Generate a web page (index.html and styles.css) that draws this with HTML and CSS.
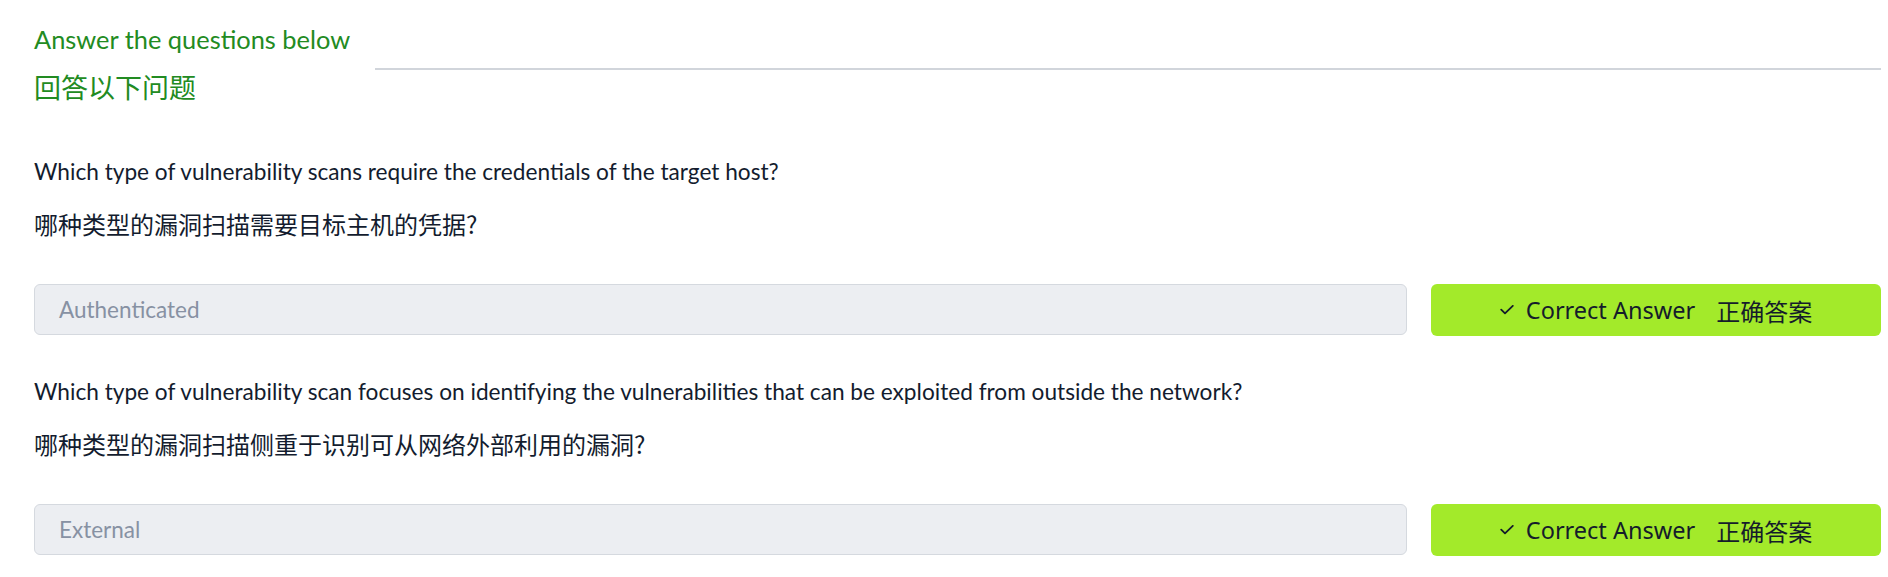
FILE: index.html
```html
<!DOCTYPE html>
<html lang="en">
<head>
<meta charset="utf-8">
<title>Answer the questions below</title>
<link rel="stylesheet" href="styles.css">
</head>
<body>
<section class="task">
  <div class="task-header">
    <div class="heading">
      <div class="heading-en">Answer the questions below</div>
      <div class="heading-zh">回答以下问题</div>
    </div>
    <div class="rule"></div>
  </div>

  <div class="qa">
    <div class="q-en">Which type of vulnerability scans require the credentials of the target host?</div>
    <div class="q-zh">哪种类型的漏洞扫描需要目标主机的凭据?</div>
    <div class="answer-row">
      <div class="answer-input">Authenticated</div>
      <button class="answer-btn" type="button">
        <svg class="check" width="14" height="10" viewBox="0 0 14 10"><polyline points="1.2,4.6 5,8.4 12.8,0.8" fill="none" stroke="#151c2b" stroke-width="1.8" stroke-linecap="round" stroke-linejoin="round"/></svg>
        <span class="btn-en">Correct Answer</span>
        <span class="btn-zh">正确答案</span>
      </button>
    </div>
  </div>

  <div class="qa">
    <div class="q-en">Which type of vulnerability scan focuses on identifying the vulnerabilities that can be exploited from outside the network?</div>
    <div class="q-zh">哪种类型的漏洞扫描侧重于识别可从网络外部利用的漏洞?</div>
    <div class="answer-row">
      <div class="answer-input">External</div>
      <button class="answer-btn" type="button">
        <svg class="check" width="14" height="10" viewBox="0 0 14 10"><polyline points="1.2,4.6 5,8.4 12.8,0.8" fill="none" stroke="#151c2b" stroke-width="1.8" stroke-linecap="round" stroke-linejoin="round"/></svg>
        <span class="btn-en">Correct Answer</span>
        <span class="btn-zh">正确答案</span>
      </button>
    </div>
  </div>
</section>
</body>
</html>
```

FILE: styles.css
```css
html, body {
  margin: 0;
  padding: 0;
  background: #ffffff;
}

body {
  font-family: Lato, "Noto Sans CJK SC", sans-serif;
  color: #131c2e;
}

.task {
  padding: 15px 7px 0 34px;
}

.task-header {
  display: flex;
  align-items: flex-start;
}

.heading {
  color: #228b22;
}

.heading-en {
  font-size: 25.4px;
  line-height: 48px;
}

.heading-zh {
  font-family: "Noto Sans CJK SC", sans-serif;
  font-size: 27px;
  line-height: 48px;
}

.rule {
  flex: 1;
  margin-left: 25px;
  margin-top: 53px;
  height: 2px;
  background: #d1d5db;
}

.qa {
  margin-top: 30px;
}

.task-header + .qa {
  margin-top: 35px;
}

.q-en {
  font-size: 22.65px;
  line-height: 52px;
}

.q-zh {
  font-family: "Noto Sans CJK SC", sans-serif;
  font-size: 24px;
  line-height: 52px;
}

.answer-row {
  display: flex;
  gap: 24px;
  margin-top: 34px;
}

.answer-input {
  flex: 1;
  box-sizing: border-box;
  height: 51px;
  padding: 0 24px;
  display: flex;
  align-items: center;
  background: #eceef2;
  border: 1px solid #d5d9df;
  border-radius: 6px;
  color: #8791a3;
  font-size: 22.5px;
}

.answer-btn {
  box-sizing: border-box;
  width: 450px;
  height: 52px;
  border: none;
  border-radius: 6px;
  background: #a3ea2a;
  color: #151c2b;
  display: flex;
  align-items: center;
  justify-content: center;
  padding: 0;
  font-family: "Noto Sans", "Noto Sans CJK SC", sans-serif;
  font-size: 23.5px;
}

.check {
  margin-right: 12px;
}

.btn-zh {
  font-family: "Noto Sans CJK SC", sans-serif;
  font-size: 24px;
  margin-left: 21px;
}
```
